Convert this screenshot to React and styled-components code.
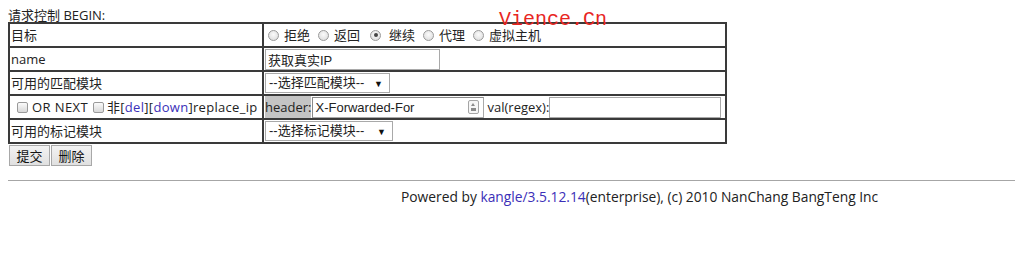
import React from "react";
import styled, { createGlobalStyle } from "styled-components";

const Global = createGlobalStyle`
  body {
    margin: 8px;
    font-family: "Open Sans", "Noto Sans CJK SC", sans-serif;
    font-size: 13px;
    color: #222;
    background: #fff;
  }
`;

const Page = styled.div`
  position: relative;
`;

const Title = styled.div`
  line-height: 14px;
  height: 14px;
`;

const Watermark = styled.div`
  position: absolute;
  left: 491px;
  top: 0px;
  font-family: "Liberation Mono", monospace;
  font-size: 20px;
  color: #e8261f;
  pointer-events: none;
  z-index: 2;
`;

const Table = styled.table`
  border-collapse: separate;
  border-spacing: 0;
  border: 1px solid #3a3a3a;
  width: 719px;
  box-sizing: border-box;
  table-layout: fixed;
`;

const Cell = styled.td`
  border: 1px solid #3a3a3a;
  padding: 0 1px;
  box-sizing: border-box;
  height: 24px;
  line-height: 18px;
  white-space: nowrap;
  vertical-align: middle;
  width: ${(p) => (p.$label ? "254px" : "auto")};
`;

const Inline = styled.div`
  display: flex;
  align-items: center;
`;

const Radio = styled.span`
  display: inline-block;
  flex: none;
  width: 11px;
  height: 11px;
  border-radius: 50%;
  border: 1px solid #9a9a9a;
  background: radial-gradient(circle at 50% 40%, #fbfbfb 0%, #d8d8d8 100%);
  position: relative;
  margin: 0 ${(p) => (p.$on ? 8 : 5)}px 0 ${(p) => (p.$first ? 3 : p.$on ? 8 : 6)}px;
  box-sizing: border-box;
  &::after {
    content: "";
    display: ${(p) => (p.$on ? "block" : "none")};
    position: absolute;
    left: 2.5px;
    top: 2.5px;
    width: 4px;
    height: 4px;
    border-radius: 50%;
    background: #444;
  }
`;

const RadioLabel = styled.span`
  margin-right: 2px;
`;

const Check = styled.span`
  display: inline-block;
  flex: none;
  width: 11px;
  height: 11px;
  border: 1px solid #9a9a9a;
  border-radius: 2px;
  background: linear-gradient(#fbfbfb, #d8d8d8);
  box-sizing: border-box;
  margin: 0 ${(p) => p.$r}px 0 ${(p) => p.$l}px;
`;

const Wide = styled.span`
  letter-spacing: ${(p) => p.$ls}px;
`;

const TextBox = styled.input`
  font-family: "Liberation Sans", "Noto Sans CJK SC", sans-serif;
  font-size: 13px;
  color: #222;
  height: 21px;
  width: ${(p) => p.$w}px;
  box-sizing: border-box;
  border: 1px solid #a9a9a9;
  border-top-color: ${(p) => (p.$sunk ? "#8a8a8a" : "#a9a9a9")};
  border-left-color: ${(p) => (p.$sunk ? "#8a8a8a" : "#a9a9a9")};
  padding: 0 2px;
  margin: 0;
  outline: none;
  background: #fff;
`;

const SelectWrap = styled.span`
  position: relative;
  display: inline-flex;
  align-items: center;
  height: 20px;
  width: ${(p) => p.$w}px;
  box-sizing: border-box;
  border: 1px solid #a9a9a9;
  padding-left: 3px;
  background: #fff;
  font-family: "Liberation Sans", "Noto Sans CJK SC", sans-serif;
`;

const Arrow = styled.span`
  position: absolute;
  right: 6px;
  top: 1px;
  font-size: 9px;
  color: #111;
`;

const Link = styled.a`
  color: #3b2fb8;
  text-decoration: none;
`;

const HeaderTag = styled.span`
  background: #c4c4c4;
  padding: 0;
  line-height: 22px;
  margin-right: 1px;
`;

const FieldWrap = styled.span`
  position: relative;
  display: inline-block;
  margin-right: 3px;
  height: 21px;
`;

const KeyIcon = styled.span`
  position: absolute;
  right: 5px;
  top: 3px;
  width: 11px;
  height: 14px;
  border: 1px solid #a5a5a5;
  border-radius: 2px;
  box-sizing: border-box;
  background: #f6f6f6;
  &::before {
    content: "";
    position: absolute;
    left: 2px;
    top: 2px;
    width: 0;
    height: 0;
    border-left: 2.5px solid transparent;
    border-right: 2.5px solid transparent;
    border-bottom: 3px solid #8a8a8a;
  }
  &::after {
    content: "";
    position: absolute;
    left: 2px;
    top: 7px;
    width: 5px;
    height: 3px;
    background: #8a8a8a;
  }
`;

const Buttons = styled.div`
  display: flex;
  gap: 1px;
  margin-top: 1px;
  margin-left: 1px;
`;

const Button = styled.button`
  font-family: "Noto Sans CJK SC", sans-serif;
  font-size: 13px;
  color: #111;
  height: 21px;
  width: 41px;
  padding: 0;
  border: 1px solid #a8a8a8;
  border-radius: 0;
  background: linear-gradient(#f3f3f3, #e0e0e0);
  margin: 0;
`;

const Rule = styled.hr`
  border: none;
  border-top: 1px solid #a6a6a6;
  margin: 14px 0 0 0;
`;

const Footer = styled.div`
  padding-left: 393px;
  margin-top: 7px;
  font-size: 13.8px;
  line-height: 18px;
  color: #222;
`;

export default function App() {
  const radios = [
    ["拒绝", false],
    ["返回", false],
    ["继续", true],
    ["代理", false],
    ["虚拟主机", false],
  ];
  return (
    <Page>
      <Global />
      <Watermark>Vience.Cn</Watermark>
      <Title>请求控制 BEGIN:</Title>
      <Table>
        <tbody>
          <tr>
            <Cell $label>目标</Cell>
            <Cell>
              <Inline>
                {radios.map(([t, on], i) => (
                  <React.Fragment key={t}>
                    <Radio $on={on} $first={i === 0} />
                    <RadioLabel>{t}</RadioLabel>
                  </React.Fragment>
                ))}
              </Inline>
            </Cell>
          </tr>
          <tr>
            <Cell $label>name</Cell>
            <Cell>
              <Inline>
                <TextBox $w={175} defaultValue="获取真实IP" />
              </Inline>
            </Cell>
          </tr>
          <tr>
            <Cell $label>可用的匹配模块</Cell>
            <Cell>
              <Inline>
                <SelectWrap $w={125}>
                  --选择匹配模块--
                  <Arrow>▼</Arrow>
                </SelectWrap>
              </Inline>
            </Cell>
          </tr>
          <tr>
            <Cell $label>
              <Inline>
                <Check $l={6} $r={4} />
                <Wide $ls={0.4}>OR NEXT</Wide>
                <Check $l={5} $r={3} />
                <Wide $ls={0.3}>
                  非[<Link href="#">del</Link>][<Link href="#">down</Link>]replace_ip
                </Wide>
              </Inline>
            </Cell>
            <Cell>
              <Inline>
                <HeaderTag>header:</HeaderTag>
                <FieldWrap>
                  <TextBox $w={172} $sunk defaultValue="X-Forwarded-For" />
                  <KeyIcon />
                </FieldWrap>
                <span>val(regex):</span>
                <TextBox $w={172} defaultValue="" />
              </Inline>
            </Cell>
          </tr>
          <tr>
            <Cell $label>可用的标记模块</Cell>
            <Cell>
              <Inline>
                <SelectWrap $w={128}>
                  --选择标记模块--
                  <Arrow>▼</Arrow>
                </SelectWrap>
              </Inline>
            </Cell>
          </tr>
        </tbody>
      </Table>
      <Buttons>
        <Button>提交</Button>
        <Button>删除</Button>
      </Buttons>
      <Rule />
      <Footer>
        Powered by <Link href="#">kangle/3.5.12.14</Link>(enterprise), (c) 2010 NanChang BangTeng Inc
      </Footer>
    </Page>
  );
}
